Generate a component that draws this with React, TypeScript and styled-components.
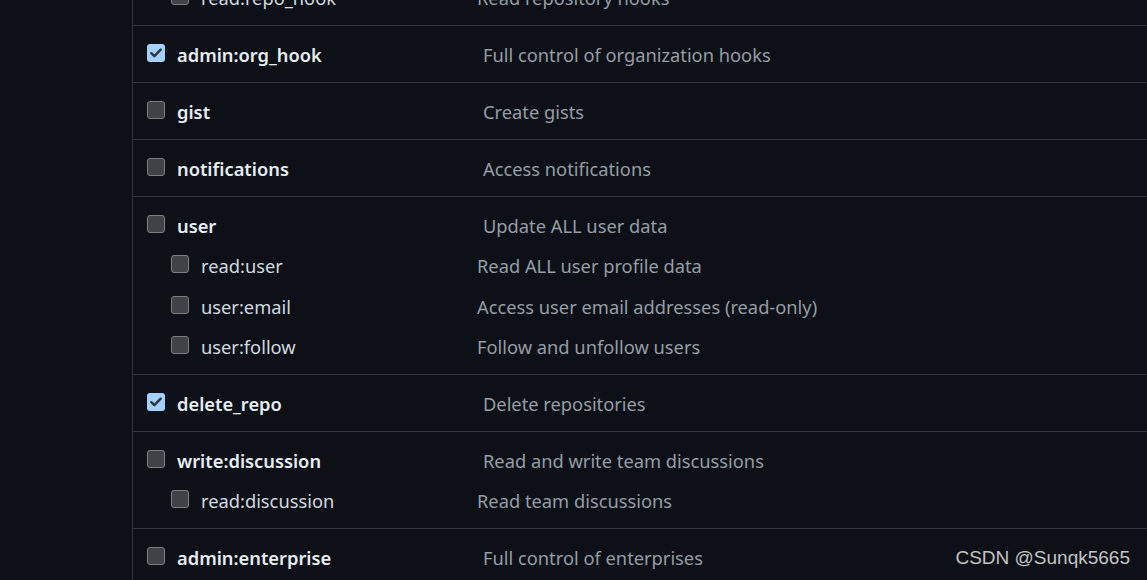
import React from "react";
import styled, { createGlobalStyle } from "styled-components";

const GlobalStyle = createGlobalStyle`
  html, body {
    margin: 0;
    padding: 0;
    background: #0d1117;
    height: 580px;
    overflow: hidden;
  }
  body {
    font-family: "Noto Sans", "Liberation Sans", sans-serif;
  }
`;

const Page = styled.div`
  display: flex;
  height: 580px;
  background: #0d1117;
  position: relative;
`;

const Gutter = styled.div`
  width: 132px;
  flex: none;
`;

const Main = styled.main`
  flex: 1;
  border-left: 1px solid #30363d;
  overflow: hidden;
`;

const List = styled.div`
  margin-top: -15px;
`;

const Group = styled.div<{ $cut?: boolean }>`
  padding: ${p => (p.$cut ? "0 0 15px" : "16px 0 15px")};
  border-bottom: 1px solid #30363d;
`;

const Row = styled.div<{ $sub?: boolean }>`
  display: flex;
  align-items: center;
  height: 25px;
  margin-top: ${p => (p.$sub ? "15.35px" : "0")};
  &:first-child {
    margin-top: 0;
  }
`;

const NameCell = styled.label<{ $sub?: boolean }>`
  display: flex;
  align-items: center;
  gap: 12px;
  box-sizing: border-box;
  width: 344px;
  padding-left: ${p => (p.$sub ? "38px" : "14px")};
  font-size: 18.3px;
  font-weight: ${p => (p.$sub ? 400 : 600)};
  color: ${p => (p.$sub ? "#d2d9e0" : "#e6edf3")};
  white-space: nowrap;
`;

const Box = styled.span<{ $checked?: boolean }>`
  flex: none;
  width: 18px;
  height: 18px;
  box-sizing: border-box;
  border-radius: 3px;
  margin-top: -3px;
  display: flex;
  align-items: center;
  justify-content: center;
  background: ${p => (p.$checked ? "#a5d0ff" : "#404245")};
  border: ${p => (p.$checked ? "none" : "1.5px solid #7a7e84")};
`;

const Desc = styled.span<{ $sub?: boolean }>`
  padding-left: ${p => (p.$sub ? "0" : "6px")};
  font-size: 18.3px;
  color: #959da6;
  white-space: nowrap;
`;

const Watermark = styled.div`
  position: absolute;
  right: 17px;
  bottom: 11px;
  font-family: "Liberation Sans", Arial, sans-serif;
  font-size: 19px;
  color: #c4c4c4;
`;

function Check({ checked }: { checked?: boolean }) {
  return (
    <Box $checked={checked}>
      {checked && (
        <svg width="12" height="10" viewBox="0 0 12 10">
          <path
            d="M1.3 5.2 L4.4 8.2 L10.7 1.6"
            fill="none"
            stroke="#2f353d"
            strokeWidth="2.4"
            strokeLinecap="round"
            strokeLinejoin="round"
          />
        </svg>
      )}
    </Box>
  );
}

type Scope = { name: string; desc: string; checked?: boolean };
type ScopeGroup = { main?: Scope; subs: Scope[]; cut?: boolean };

const groups: ScopeGroup[] = [
  { cut: true, subs: [{ name: "read:repo_hook", desc: "Read repository hooks" }] },
  { main: { name: "admin:org_hook", desc: "Full control of organization hooks", checked: true }, subs: [] },
  { main: { name: "gist", desc: "Create gists" }, subs: [] },
  { main: { name: "notifications", desc: "Access notifications" }, subs: [] },
  {
    main: { name: "user", desc: "Update ALL user data" },
    subs: [
      { name: "read:user", desc: "Read ALL user profile data" },
      { name: "user:email", desc: "Access user email addresses (read-only)" },
      { name: "user:follow", desc: "Follow and unfollow users" }
    ]
  },
  { main: { name: "delete_repo", desc: "Delete repositories", checked: true }, subs: [] },
  {
    main: { name: "write:discussion", desc: "Read and write team discussions" },
    subs: [{ name: "read:discussion", desc: "Read team discussions" }]
  },
  { main: { name: "admin:enterprise", desc: "Full control of enterprises" }, subs: [] }
];

export default function App() {
  return (
    <Page>
      <GlobalStyle />
      <Gutter />
      <Main>
        <List>
          {groups.map((g, i) => (
            <Group key={i} $cut={g.cut}>
              {g.main && (
                <Row>
                  <NameCell>
                    <Check checked={g.main.checked} />
                    {g.main.name}
                  </NameCell>
                  <Desc>{g.main.desc}</Desc>
                </Row>
              )}
              {g.subs.map(s => (
                <Row key={s.name} $sub>
                  <NameCell $sub>
                    <Check checked={s.checked} />
                    {s.name}
                  </NameCell>
                  <Desc $sub>{s.desc}</Desc>
                </Row>
              ))}
            </Group>
          ))}
        </List>
      </Main>
      <Watermark>CSDN @Sunqk5665</Watermark>
    </Page>
  );
}
